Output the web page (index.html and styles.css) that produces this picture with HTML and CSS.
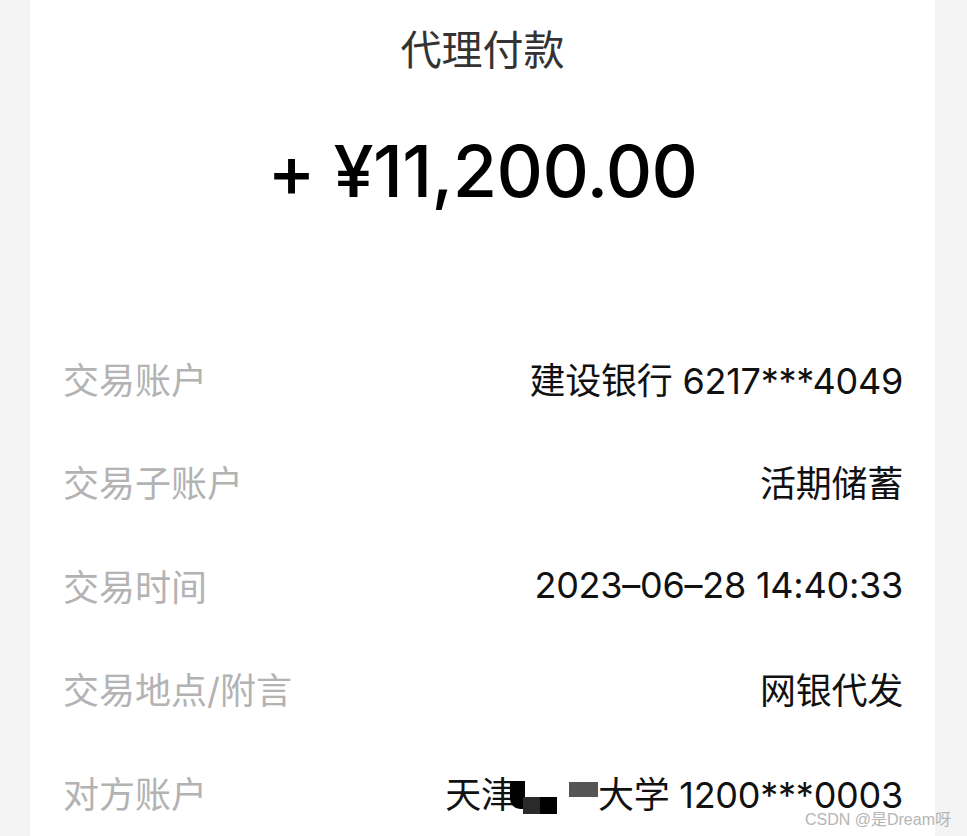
FILE: index.html
```html
<!DOCTYPE html>
<html lang="zh-CN">
<head>
  <meta charset="UTF-8" />
  <meta name="viewport" content="width=device-width, initial-scale=1.0"/>
  <title>代理付款</title>
  <link rel="stylesheet" href="styles.css">
</head>
<body>
  <div class="sheet">
    <h1 class="title">代理付款</h1>
    <div class="amount">+ ¥11,200.00</div>

    <div class="details">
      <div class="row">
        <span class="label">交易账户</span>
        <span class="value">建设银行 6217***4049</span>
      </div>
      <div class="row">
        <span class="label">交易子账户</span>
        <span class="value">活期储蓄</span>
      </div>
      <div class="row">
        <span class="label">交易时间</span>
        <span class="value">2023–06–28 14:40:33</span>
      </div>
      <div class="row">
        <span class="label">交易地点/附言</span>
        <span class="value">网银代发</span>
      </div>
      <div class="row">
        <span class="label">对方账户</span>
        <span class="value">天津<span class="mask"><i class="blk tall"></i><i class="blk low dim"></i><i class="blk low"></i></span><i class="bar"></i>大学 1200***0003</span>
      </div>
    </div>
  </div>

  <div class="mark">CSDN @是Dream呀</div>
</body>
</html>
```

FILE: styles.css
```css
* {
  box-sizing: border-box;
}

body {
  margin: 0;
  padding: 0;
  background: #f4f4f4;
  font-family: Inter, "Noto Sans CJK SC", sans-serif;
  overflow: hidden;
}

.sheet {
  width: 905px;
  height: 836px;
  margin-left: 30px;
  background: #fff;
  overflow: hidden;
}

.title {
  margin: 0;
  height: 100px;
  line-height: 100px;
  text-align: center;
  font-size: 41px;
  font-weight: 400;
  color: #333;
}

.amount {
  margin-top: 31px;
  height: 80px;
  line-height: 80px;
  text-align: center;
  font-size: 72px;
  font-weight: 500;
  color: #000;
  letter-spacing: -0.6px;
}

.details {
  margin-top: 115px;
  padding: 0 32px 0 33px;
}

.row {
  display: flex;
  justify-content: space-between;
  align-items: center;
  height: 103.5px;
  font-size: 36px;
}

.label {
  color: #b3b3b3;
}

.value {
  color: #111;
  display: flex;
  align-items: center;
  letter-spacing: -0.25px;
}

/* redacted part of the counterparty name */
.mask {
  display: inline-flex;
  align-items: flex-end;
  height: 38px;
  margin-left: -7px;
  transform: translateY(3px);
}

.blk {
  display: block;
  background: #000;
}

.blk.tall {
  width: 15px;
  height: 28px;
  margin-bottom: 5px;
  border-bottom-left-radius: 10px;
}

.blk.low {
  width: 17px;
  height: 17px;
}

.blk.dim {
  background: #2a2a2a;
  margin-left: -2px;
}

.bar {
  display: block;
  width: 29px;
  height: 15px;
  margin-left: 12px;
  background: #555;
  transform: translateY(-2px);
}

.mark {
  position: absolute;
  right: 16px;
  bottom: 6px;
  font-family: "Liberation Sans", "Noto Sans CJK SC", sans-serif;
  font-size: 16px;
  color: #b5b5b5;
}
```
